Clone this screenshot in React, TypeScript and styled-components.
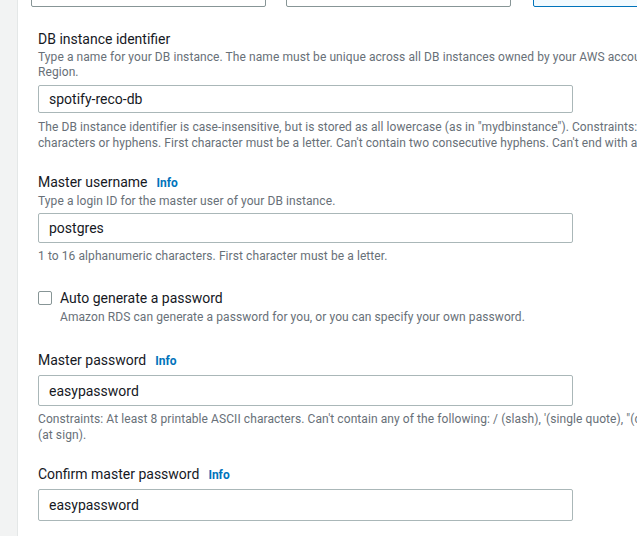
import React from "react";
import styled, { createGlobalStyle } from "styled-components";

const Global = createGlobalStyle`
  html, body { margin: 0; padding: 0; background: #ffffff; overflow: hidden; }
  body { font-family: Roboto, "Liberation Sans", Arial, sans-serif; color: #16191f; }
  * { box-sizing: border-box; }
`;

const Page = styled.div`
  display: flex;
  width: 637px;
  height: 536px;
  overflow: hidden;
`;

const Rail = styled.div`
  flex: 0 0 18px;
  background: #f2f3f3;
  border-right: 1px solid #e4e7e7;
`;

const Panel = styled.div`
  flex: 1;
  min-width: 0;
  background: #ffffff;
  padding-left: 13px;
`;

const TileRow = styled.div`
  display: flex;
  margin-top: -34px;
`;

const Tile = styled.div<{ $w: number; $gap: number; $selected?: boolean }>`
  flex: 0 0 ${(p) => p.$w}px;
  height: 41px;
  margin-right: ${(p) => p.$gap}px;
  border: 1px solid ${(p) => (p.$selected ? "#0073bb" : "#879596")};
  background: ${(p) => (p.$selected ? "#f1faff" : "#ffffff")};
  border-radius: 2px;
`;

const Form = styled.div`
  display: flex;
  flex-direction: column;
  padding-left: 7px;
  padding-top: 21px;
`;

const Field = styled.div<{ $gap: number }>`
  display: flex;
  flex-direction: column;
  margin-top: ${(p) => p.$gap}px;
`;

const Label = styled.div`
  font-size: 14px;
  line-height: 22px;
  color: #16191f;
  white-space: nowrap;
  display: flex;
  align-items: baseline;
`;

const Info = styled.span`
  font-size: 12px;
  font-weight: 700;
  color: #0073bb;
  margin-left: 9px;
`;

const Desc = styled.div`
  font-size: 12px;
  line-height: 15px;
  letter-spacing: 0.08px;
  color: #687078;
  white-space: nowrap;
`;

const Line = styled.span`
  display: block;
`;

const Input = styled.div<{ $h: number; $mt: number }>`
  width: 535px;
  height: ${(p) => p.$h}px;
  margin-top: ${(p) => p.$mt}px;
  border: 1px solid #aab7b8;
  border-radius: 2px;
  padding: 0 10px;
  display: flex;
  align-items: center;
  font-size: 14px;
  color: #16191f;
`;

const Hint = styled(Desc)<{ $mt: number }>`
  line-height: 16px;
  margin-top: ${(p) => p.$mt}px;
`;

const CheckRow = styled.div`
  display: flex;
  gap: 8px;
  margin-top: 23px;
`;

const Box = styled.div`
  width: 14px;
  height: 14px;
  margin-top: 4px;
  border: 1px solid #879596;
  border-radius: 2px;
  background: #ffffff;
`;

const CheckText = styled.div`
  display: flex;
  flex-direction: column;
`;

const CheckDesc = styled(Desc)`
  margin-top: 1px;
`;

export default function App() {
  return (
    <>
      <Global />
      <Page>
        <Rail />
        <Panel>
          <TileRow>
            <Tile $w={235} $gap={20} />
            <Tile $w={225} $gap={22} />
            <Tile $w={300} $gap={0} $selected />
          </TileRow>
          <Form>
            <Field $gap={0}>
              <Label>DB instance identifier</Label>
              <Desc>
                <Line>
                  Type a name for your DB instance. The name must be unique across all DB instances owned by your AWS account in the current AWS
                </Line>
                <Line>Region.</Line>
              </Desc>
              <Input $h={28} $mt={5}>spotify-reco-db</Input>
              <Hint $mt={6}>
                <Line>
                  The DB instance identifier is case-insensitive, but is stored as all lowercase (as in "mydbinstance"). Constraints: 1 to 60 alphanumeric
                </Line>
                <Line>
                  characters or hyphens. First character must be a letter. Can't contain two consecutive hyphens. Can't end with a hyphen.
                </Line>
              </Hint>
            </Field>
            <Field $gap={20}>
              <Label>
                Master username<Info>Info</Info>
              </Label>
              <Desc>Type a login ID for the master user of your DB instance.</Desc>
              <Input $h={30} $mt={4}>postgres</Input>
              <Hint $mt={5}>1 to 16 alphanumeric characters. First character must be a letter.</Hint>
            </Field>
            <CheckRow>
              <Box />
              <CheckText>
                <Label>Auto generate a password</Label>
                <CheckDesc>Amazon RDS can generate a password for you, or you can specify your own password.</CheckDesc>
              </CheckText>
            </CheckRow>
            <Field $gap={24}>
              <Label>
                Master password<Info>Info</Info>
              </Label>
              <Input $h={31} $mt={3}>easypassword</Input>
              <Hint $mt={5}>
                <Line>
                  Constraints: At least 8 printable ASCII characters. Can't contain any of the following: / (slash), '(single quote), "(double quote) and @
                </Line>
                <Line>(at sign).</Line>
              </Hint>
            </Field>
            <Field $gap={20}>
              <Label>
                Confirm master password<Info>Info</Info>
              </Label>
              <Input $h={32} $mt={3}>easypassword</Input>
            </Field>
          </Form>
        </Panel>
      </Page>
    </>
  );
}
